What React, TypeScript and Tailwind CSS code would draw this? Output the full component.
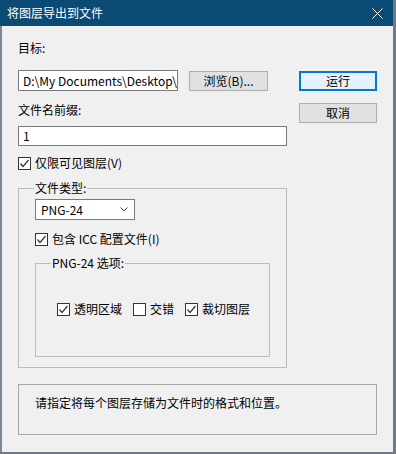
import type { ReactNode } from 'react';

const font = { fontFamily: '"Noto Sans CJK SC", "Noto Sans", sans-serif' };

function CheckBox({ checked }: { checked: boolean }) {
  return (
    <svg width="13" height="13" viewBox="0 0 13 13" className="shrink-0">
      <rect x="0.5" y="0.5" width="12" height="12" fill="#fff" stroke="#333" />
      {checked && <polyline points="2.5,6.5 5,9.5 10.5,3" fill="none" stroke="#333" strokeWidth="1.2" />}
    </svg>
  );
}

function Check({ checked, children }: { checked: boolean; children: ReactNode }) {
  return (
    <div className="flex items-center h-[16px] gap-[4px]">
      <CheckBox checked={checked} />
      <span className="leading-[16px]">{children}</span>
    </div>
  );
}

function Button({ children, primary }: { children: ReactNode; primary?: boolean }) {
  return (
    <div
      className={`h-[20px] flex items-center justify-center leading-[16px] ${
        primary ? 'bg-[#e5f1fb] border-2 border-[#0078d7]' : 'bg-[#e1e1e1] border border-[#adadad]'
      }`}
    >
      {children}
    </div>
  );
}

export default function App() {
  return (
    <div className="w-[396px] h-[454px] bg-[#6f7a86] text-[12px] text-black" style={font}>
      <div className="w-[393px] h-[452px] bg-[#f0f0f0] flex flex-col">
        {/* 标题栏 */}
        <div className="h-[26px] bg-[#0b4a72] flex items-center justify-between pl-[7px] pr-[10px] shrink-0">
          <span className="text-white text-[12px] leading-[16px]">将图层导出到文件</span>
          <svg width="11" height="11" viewBox="0 0 11 11">
            <path d="M0.5 0.5 L10.5 10.5 M10.5 0.5 L0.5 10.5" stroke="#fff" strokeWidth="1" />
          </svg>
        </div>

        <div className="flex-1 flex flex-col border-l-2 border-[#7d8894] pl-[16px]">
          <div className="flex">
            {/* 左列 */}
            <div className="w-[269px] flex flex-col">
              <div className="mt-[14px] h-[16px] leading-[16px]">目标:</div>
              <div className="mt-[14px] flex items-start">
                <div className="w-[160px] h-[21px] bg-white border border-[#7a7a7a] pl-[4px] leading-[19px] overflow-hidden whitespace-nowrap">
                  D:\My Documents\Desktop\
                </div>
                <div className="ml-[11px] mt-[1px] w-[79px]">
                  <Button>浏览(B)...</Button>
                </div>
              </div>
              <div className="mt-[11px] h-[16px] leading-[16px]">文件名前缀:</div>
              <div className="mt-[8px] h-[20px] bg-white border border-[#7a7a7a] pl-[4px] leading-[18px]">1</div>
              <div className="mt-[9px]">
                <Check checked>仅限可见图层(V)</Check>
              </div>

              {/* 文件类型 */}
              <div className="relative mt-[17px] h-[180px] border border-[#bcbcbc] pl-[16px] flex flex-col">
                <span className="absolute -top-[9px] left-[15px] px-[1px] bg-[#f0f0f0] leading-[16px]">文件类型:</span>
                <div className="mt-[10px] w-[100px] h-[21px] bg-white border border-[#7a7a7a] flex items-center justify-between pl-[5px] pr-[6px]">
                  <span className="leading-[16px]">PNG-24</span>
                  <svg width="8" height="5" viewBox="0 0 8 5">
                    <polyline points="0.5,0.5 4,4 7.5,0.5" fill="none" stroke="#444" strokeWidth="1" />
                  </svg>
                </div>
                <div className="mt-[11px]">
                  <Check checked>包含 ICC 配置文件(I)</Check>
                </div>

                {/* PNG-24 选项 */}
                <div className="relative mt-[16px] w-[235px] h-[94px] border border-[#bcbcbc] pl-[21px]">
                  <span className="absolute -top-[9px] left-[15px] px-[1px] bg-[#f0f0f0] leading-[16px]">PNG-24 选项:</span>
                  <div className="mt-[37px] flex items-center gap-[11px]">
                    <Check checked>透明区域</Check>
                    <Check checked={false}>交错</Check>
                    <Check checked>裁切图层</Check>
                  </div>
                </div>
              </div>
            </div>

            {/* 右列按钮 */}
            <div className="ml-[12px] w-[78px] flex flex-col">
              <div className="mt-[45px]">
                <Button primary>运行</Button>
              </div>
              <div className="mt-[12px]">
                <Button>取消</Button>
              </div>
            </div>
          </div>

          {/* 说明 */}
          <div className="mt-[16px] w-[359px] h-[51px] border border-[#a8a8a8] pl-[16px] pt-[10px] leading-[16px]">
            请指定将每个图层存储为文件时的格式和位置。
          </div>
        </div>
      </div>
    </div>
  );
}
